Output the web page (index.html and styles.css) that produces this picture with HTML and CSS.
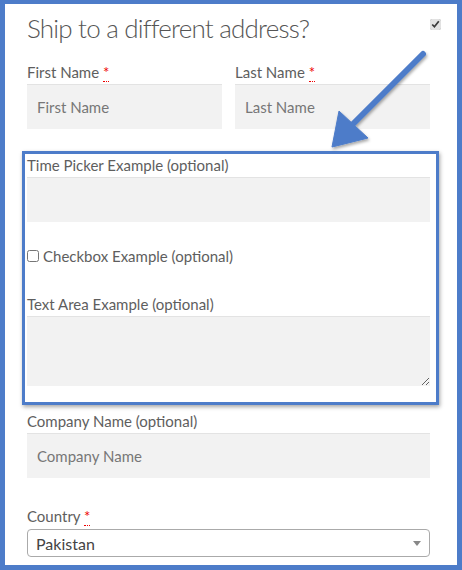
FILE: index.html
```html
<!DOCTYPE html>
<html lang="en">
<head>
    <meta charset="UTF-8">
    <title>Shipping Address</title>
    <link rel="stylesheet" href="styles.css">
</head>
<body>
    <div class="frame">
        <h3 class="ship-title">
            <span>Ship to a different address?</span>
            <input type="checkbox" class="ship-check" checked>
        </h3>

        <div class="row">
            <div class="field half">
                <label>First Name <abbr title="required">*</abbr></label>
                <input type="text" placeholder="First Name">
            </div>
            <div class="field half">
                <label>Last Name <abbr title="required">*</abbr></label>
                <input type="text" placeholder="Last Name">
            </div>
        </div>

        <div class="highlight">
            <div class="field">
                <label>Time Picker Example (optional)</label>
                <input type="text">
            </div>
            <div class="field check-field">
                <label><input type="checkbox"> Checkbox Example (optional)</label>
            </div>
            <div class="field">
                <label>Text Area Example (optional)</label>
                <textarea></textarea>
            </div>
        </div>

        <div class="field company">
            <label>Company Name (optional)</label>
            <input type="text" placeholder="Company Name">
        </div>

        <div class="field country">
            <label>Country <abbr title="required">*</abbr></label>
            <div class="select">
                <span>Pakistan</span>
                <span class="caret"></span>
            </div>
        </div>

        <!-- arrow pointing at the new fields -->
        <svg class="arrow" width="140" height="130" viewBox="0 0 140 130">
            <defs>
                <filter id="shadow" x="-20%" y="-20%" width="140%" height="140%">
                    <feDropShadow dx="1" dy="2" stdDeviation="1.5" flood-color="#000" flood-opacity="0.35"/>
                </filter>
            </defs>
            <g filter="url(#shadow)" fill="#4d7cc9" stroke="#4d7cc9">
                <line x1="118" y1="20" x2="48" y2="90" stroke-width="6" stroke-linecap="round"/>
                <polygon points="27,113 34,77 63,104" stroke-width="1" stroke-linejoin="round"/>
            </g>
        </svg>
    </div>
</body>
</html>
```

FILE: styles.css
```css
html, body {
    margin: 0;
    padding: 0;
}

body {
    font-family: "Lato", "Open Sans", sans-serif;
    color: #5e5e5e;
    background-color: #fff;
}

.frame {
    position: relative;
    width: 462px;
    height: 570px;
    box-sizing: border-box;
    border: solid #4d7cc9;
    border-width: 4px 5px 5px 5px;
    padding: 0 27px 0 22px;
    overflow: hidden;
}

.ship-title {
    display: flex;
    justify-content: space-between;
    align-items: center;
    margin: 7px 0 0 0;
    height: 34px;
    font-size: 26px;
    font-weight: 300;
    letter-spacing: -0.8px;
    color: #555;
}

.ship-check {
    margin: 0 -11px 0 0;
    width: 11px;
    height: 11px;
    position: relative;
    top: -4px;
    accent-color: #e2e2e2;
}

.row {
    display: flex;
    gap: 13px;
    margin-top: 17px;
}

.half {
    flex: 1;
}

.field label {
    display: block;
    font-size: 15px;
    line-height: 20px;
    margin-bottom: 2px;
}

abbr {
    color: #e00;
    text-decoration: none;
    border-bottom: 1px dotted #e00;
    cursor: help;
}

.field input[type="text"],
.field textarea {
    display: block;
    width: 100%;
    box-sizing: border-box;
    height: 45px;
    border: none;
    border-top: 1px solid #e3e3e3;
    background-color: #f2f2f2;
    padding: 0 10px;
    font-family: inherit;
    font-size: 15px;
    color: #555;
}

.field input::placeholder {
    color: #777;
}

.field textarea {
    height: 70px;
    resize: vertical;
}

.highlight {
    margin: 22px -9px 0 -5px;
    padding: 1px 6px 16px 2px;
    border: 3px solid #4d7cc9;
    box-shadow: 1px 2px 4px rgba(0, 0, 0, 0.35);
}

.check-field {
    margin-top: 24px;
}

.check-field label {
    display: flex;
    align-items: center;
    gap: 4px;
    margin: 0;
}

.check-field input {
    margin: 0;
    width: 12px;
    height: 12px;
}

.check-field + .field {
    margin-top: 28px;
}

.company {
    margin-top: 6px;
}

.country {
    margin-top: 28px;
}

.country label {
    margin-bottom: 3px;
}

.select {
    display: flex;
    justify-content: space-between;
    align-items: center;
    height: 28px;
    box-sizing: border-box;
    border: 1px solid #aaa;
    border-radius: 4px;
    padding: 0 8px 0 8px;
    font-size: 16px;
    color: #444;
    background-color: #fff;
}

.caret {
    width: 0;
    height: 0;
    border-left: 4px solid transparent;
    border-right: 4px solid transparent;
    border-top: 5px solid #888;
}

.arrow {
    position: absolute;
    left: 300px;
    top: 30px;
}
```
